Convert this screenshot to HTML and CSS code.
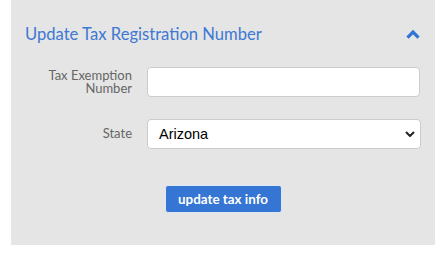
FILE: index.html
```html
<!DOCTYPE html>
<html>
<head>
<meta charset="utf-8">
<link rel="stylesheet" href="styles.css">
</head>
<body>
<div class="panel">
  <div class="header">
    <h2 class="title">Update Tax Registration Number</h2>
    <svg class="chev" width="14" height="10" viewBox="0 0 14 10"><path d="M1.5 8.6 L7 3.1 L12.5 8.6" fill="none" stroke="#3274d3" stroke-width="3.2"/></svg>
  </div>
  <form class="form">
    <label class="label" for="ten">Tax Exemption Number</label>
    <input class="input" id="ten" type="text">
    <label class="label state" for="st">State</label>
    <select class="select" id="st"><option>Arizona</option></select>
  </form>
  <div class="actions">
    <button class="btn" type="button">update tax info</button>
  </div>
</div>
</body>
</html>
```
FILE: styles.css
```css
body {
  margin: 0;
  background: #fff;
  font-family: Lato, "Open Sans", sans-serif;
}
.panel {
  margin-left: 11px;
  width: 424px;
  height: 245px;
  background: #e5e5e5;
  box-sizing: border-box;
  padding-top: 22px;
}
.header {
  display: flex;
  align-items: center;
  justify-content: space-between;
  padding: 0 15px 0 14px;
  height: 24px;
}
.title {
  margin: 0;
  font-size: 16.6px;
  font-weight: 400;
  color: #3d78d3;
}
.chev { display: block; }
.form {
  margin-top: 21px;
  display: grid;
  grid-template-columns: 121px 273px;
  column-gap: 15px;
  row-gap: 22px;
  align-items: center;
}
.label {
  text-align: right;
  font-size: 13px;
  line-height: 13.5px;
  color: #666;
}
.input {
  box-sizing: border-box;
  height: 30px;
  border: 1px solid #ccc;
  border-radius: 4px;
  background: #fff;
  margin: 0;
}
.select {
  box-sizing: border-box;
  width: 274px;
  height: 30px;
  border: 1px solid #ccc;
  border-radius: 4px;
  margin: 0;
  padding: 0 0 0 11px;
  appearance: none;
  -webkit-appearance: none;
  font-family: "Liberation Sans", Arial, sans-serif;
  font-size: 14.5px;
  color: #000;
  background: #fff url("data:image/svg+xml;utf8,<svg xmlns='http://www.w3.org/2000/svg' width='10' height='6' viewBox='0 0 10 6'><path d='M1 1 L5 5 L9 1' fill='none' stroke='%23222' stroke-width='2'/></svg>") no-repeat right 5px center;
}
.actions {
  display: flex;
  justify-content: center;
  margin-top: 36px;
}
.btn {
  width: 117px;
  height: 28px;
  border: 1px solid #dfe8f7;
  border-radius: 3px;
  background: #3575d3;
  color: #fff;
  font-family: Lato, sans-serif;
  font-weight: 700;
  font-size: 13.4px;
  padding: 0;
}
```
